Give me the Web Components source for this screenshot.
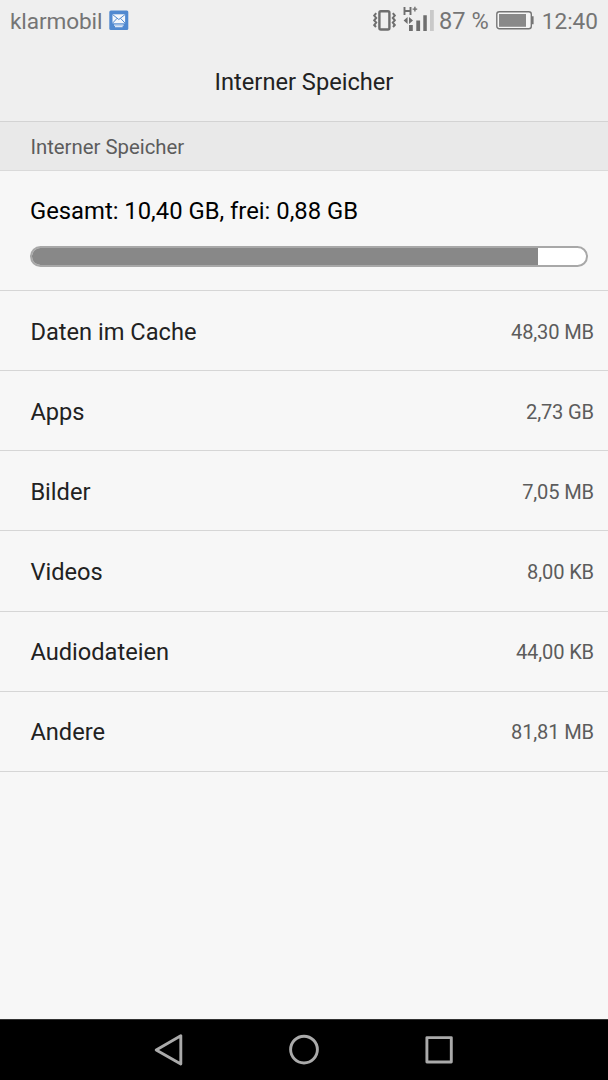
<!DOCTYPE html>
<html lang="de">
<head>
<meta charset="utf-8">
<meta name="viewport" content="width=device-width, initial-scale=1">
<title>Interner Speicher</title>
<style>
  body {
    margin: 0;
    font-family: Roboto, "Liberation Sans", sans-serif;
    background: #f7f7f7;
  }
</style>
</head>
<body>
<storage-screen></storage-screen>

<script>
class StatusBar extends HTMLElement {
  constructor() {
    super();
    const shadow = this.attachShadow({ mode: 'open' });

    shadow.innerHTML = `
      <style>
        :host {
          display: flex;
          align-items: center;
          box-sizing: border-box;
          height: 42px;
          padding: 0 10px;
          color: #757575;
          font-size: 22.6px;
          line-height: 43px;
          white-space: nowrap;
        }
        svg { display: block; flex: none; }
        .carrier { letter-spacing: -0.1px; }
        .mail { margin-left: 7px; }
        .vibrate { margin-left: auto; }
        .signal { margin-left: 6px; }
        .percent { margin-left: 5px; font-size: 23.6px; }
        .battery { margin: 0 8px 0 7px; }
      </style>
      <span class="carrier"><slot name="carrier"></slot></span>
      <svg class="mail" width="20" height="42" viewBox="0 0 20 42">
        <rect x=".3" y="10.6" width="19" height="19.4" rx="1.5" fill="#5089d0"/>
        <rect x="3.5" y="14.3" width="12.6" height="9" fill="#f4f7fb"/>
        <path d="M3.5 14.5l6.3 5 6.3-5M3.5 23.2l4.6-4.9M16.1 23.2l-4.6-4.9" fill="none" stroke="#5089d0"/>
        <path d="M5 25.2h9.6M6 26.7h7.6" stroke="#dce8f6" stroke-width="1.3"/>
      </svg>
      <svg class="vibrate" width="24" height="42" viewBox="0 0 24 42" fill="none" stroke="#6e6e6e">
        <rect x="6.4" y="11.2" width="10" height="18.3" rx="1.5" stroke-width="2.4"/>
        <path d="M3.2 13.2l-2 2.4 2 2.3-2 2.4 2 2.3-2 2.4 1.8 2M19.8 13.2l2 2.4-2 2.3 2 2.4-2 2.3 2 2.4-1.8 2" stroke-width="2"/>
      </svg>
      <svg class="signal" width="31" height="42" viewBox="0 0 31 42">
        <path d="M1.5 7v8M7.5 7v8M1.5 11h6" stroke="#6e6e6e" stroke-width="1.9"/>
        <path d="M9.6 9.1h4.6M11.9 6.8v4.6" stroke="#6e6e6e" stroke-width="1.4"/>
        <path d="M4.6 17v7L.6 20.5zM6 17v7l4-3.5z" fill="#6e6e6e"/>
        <path d="M6 25h3.8v6H6zM13.3 20.6h3.8V31h-3.8zM20.3 15.2h3.5V31h-3.5z" fill="#6e6e6e"/>
        <path d="M27 10h3.8v21H27z" fill="#c9c9c9"/>
      </svg>
      <span class="percent"><slot name="battery"></slot></span>
      <svg class="battery" width="38" height="42" viewBox="0 0 38 42">
        <rect x=".8" y="11.8" width="34.5" height="17" rx="2.5" fill="#f6f6f6" stroke="#757575" stroke-width="1.4"/>
        <rect x="3" y="14" width="27" height="12.8" fill="#898989"/>
        <path d="M36 16.3h1.6v8H36z" fill="#757575"/>
      </svg>
      <span><slot name="time"></slot></span>
    `;
  }
}

class TitleBar extends HTMLElement {
  constructor() {
    super();
    const shadow = this.attachShadow({ mode: 'open' });

    shadow.innerHTML = `
      <style>
        :host {
          display: flex;
          justify-content: center;
          height: 79px;
          border-bottom: 1px solid #d3d3d3;
          font-size: 23.65px;
          line-height: 81px;
          color: #222;
        }
      </style>
      <slot></slot>
    `;
  }
}

class SectionHeader extends HTMLElement {
  constructor() {
    super();
    const shadow = this.attachShadow({ mode: 'open' });

    shadow.innerHTML = `
      <style>
        :host {
          display: block;
          height: 48px;
          padding-left: 30.4px;
          border-bottom: 1px solid #dadada;
          background: #e9e9e9;
          color: #5c5c5c;
          font-size: 20.35px;
          line-height: 50px;
        }
      </style>
      <slot></slot>
    `;
  }
}

class StorageSummary extends HTMLElement {
  constructor() {
    super();
    const shadow = this.attachShadow({ mode: 'open' });
    const used = this.getAttribute('used');

    shadow.innerHTML = `
      <style>
        :host {
          display: flex;
          flex-direction: column;
          box-sizing: border-box;
          height: 119px;
          padding: 24px 20px 0 30px;
          color: #000;
          font-size: 23.8px;
          line-height: 32px;
        }
        .bar {
          box-sizing: border-box;
          height: 21px;
          margin-top: 19px;
          border: 2px solid #a8a8a8;
          border-radius: 11px;
          background: #fff;
          overflow: hidden;
        }
        .used {
          width: ${used}%;
          height: 100%;
          background: #888;
        }
      </style>
      <div><slot></slot></div>
      <div class="bar"><div class="used"></div></div>
    `;
  }
}

class StorageRow extends HTMLElement {
  constructor() {
    super();
    const shadow = this.attachShadow({ mode: 'open' });

    shadow.innerHTML = `
      <style>
        :host {
          display: flex;
          align-items: center;
          justify-content: space-between;
          box-sizing: border-box;
          height: 80.17px;
          padding: 2px 14px 0 30.4px;
          border-top: 1px solid #d6d6d6;
          color: #222;
          font-size: 23.65px;
        }
        .size {
          color: #5c5c5c;
          font-size: 20.1px;
          letter-spacing: -0.15px;
        }
      </style>
      <span><slot></slot></span>
      <span class="size"><slot name="size"></slot></span>
    `;
  }
}

class NavBar extends HTMLElement {
  constructor() {
    super();
    const shadow = this.attachShadow({ mode: 'open' });

    shadow.innerHTML = `
      <style>
        :host {
          display: flex;
          justify-content: center;
          align-items: center;
          gap: 99px;
          box-sizing: border-box;
          height: 61px;
          background: #000;
          border-top: 1px solid #333;
        }
        svg {
          display: block;
          fill: none;
          stroke: #aaa;
          stroke-width: 2.9;
          stroke-linejoin: round;
        }
      </style>
      <svg width="36" height="36" viewBox="0 0 36 36"><path d="M29.8 3.7v28.4L5.2 17.9z"/></svg>
      <svg width="36" height="36" viewBox="0 0 36 36"><circle cx="18" cy="17.6" r="13.4"/></svg>
      <svg width="36" height="36" viewBox="0 0 36 36"><path d="M5.9 5.6h24.4V30H5.9z"/></svg>
    `;
  }
}

class StorageScreen extends HTMLElement {
  constructor() {
    super();
    const shadow = this.attachShadow({ mode: 'open' });

    shadow.innerHTML = `
      <style>
        :host {
          display: flex;
          flex-direction: column;
          height: 1080px;
          overflow: hidden;
          background: #f7f7f7;
        }
        header { background: #efefef; }
        main { flex: 1; }
        .list { border-bottom: 1px solid #d6d6d6; }
      </style>
      <header>
        <status-bar>
          <span slot="carrier">klarmobil</span>
          <span slot="battery">87 %</span>
          <span slot="time">12:40</span>
        </status-bar>
        <title-bar>Interner Speicher</title-bar>
      </header>
      <main>
        <section-header>Interner Speicher</section-header>
        <storage-summary used="91.4">Gesamt: 10,40 GB, frei: 0,88 GB</storage-summary>
        <div class="list">
          <storage-row>Daten im Cache<span slot="size">48,30 MB</span></storage-row>
          <storage-row>Apps<span slot="size">2,73 GB</span></storage-row>
          <storage-row>Bilder<span slot="size">7,05 MB</span></storage-row>
          <storage-row>Videos<span slot="size">8,00 KB</span></storage-row>
          <storage-row>Audiodateien<span slot="size">44,00 KB</span></storage-row>
          <storage-row>Andere<span slot="size">81,81 MB</span></storage-row>
        </div>
      </main>
      <nav-bar></nav-bar>
    `;
  }
}

customElements.define('status-bar', StatusBar);
customElements.define('title-bar', TitleBar);
customElements.define('section-header', SectionHeader);
customElements.define('storage-summary', StorageSummary);
customElements.define('storage-row', StorageRow);
customElements.define('nav-bar', NavBar);
customElements.define('storage-screen', StorageScreen);
</script>
</body>
</html>
